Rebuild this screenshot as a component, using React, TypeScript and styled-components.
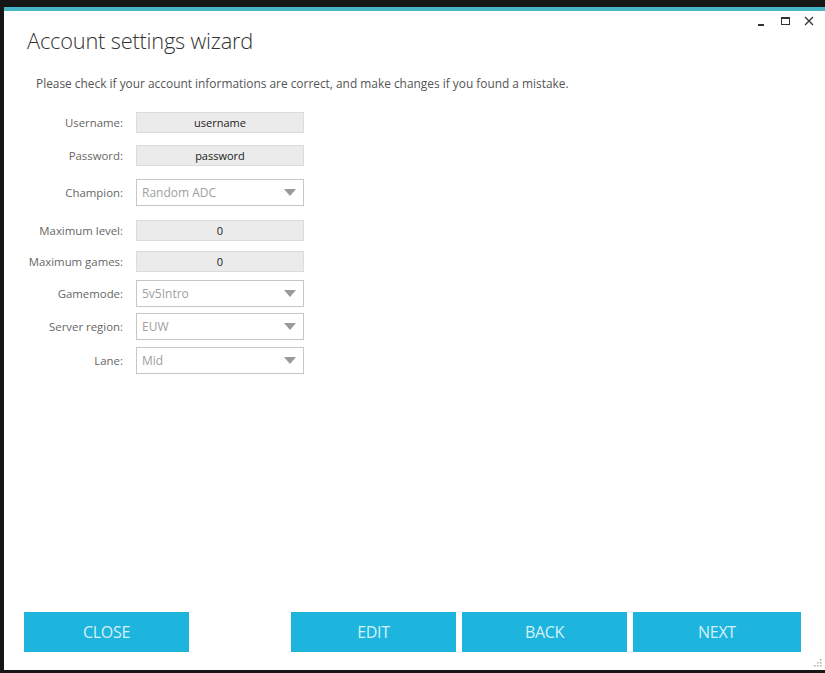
import React from 'react';
import styled, { createGlobalStyle } from 'styled-components';

const GlobalStyle = createGlobalStyle`
  html, body {
    margin: 0;
    padding: 0;
    background: #161616;
  }
  * {
    box-sizing: border-box;
  }
`;

const fields = [
  { label: 'Username:', value: 'username', kind: 'text', gap: 0 },
  { label: 'Password:', value: 'password', kind: 'text', gap: 12 },
  { label: 'Champion:', value: 'Random ADC', kind: 'select', gap: 13 },
  { label: 'Maximum level:', value: '0', kind: 'text', gap: 14 },
  { label: 'Maximum games:', value: '0', kind: 'text', gap: 10 },
  { label: 'Gamemode:', value: '5v5Intro', kind: 'select', gap: 8 },
  { label: 'Server region:', value: 'EUW', kind: 'select', gap: 6 },
  { label: 'Lane:', value: 'Mid', kind: 'select', gap: 7 },
];

const App: React.FC = () => {
  return (
    <Page>
      <GlobalStyle />
      <Window>
        <TopBar>
          <Title>Account settings wizard</Title>
          <Controls>
            <Control>
              <MinIcon />
            </Control>
            <Control>
              <MaxIcon />
            </Control>
            <Control>
              <svg width="10" height="10" viewBox="0 0 10 10">
                <path d="M1 1 L9 9 M9 1 L1 9" stroke="#333" strokeWidth="1.3" fill="none" />
              </svg>
            </Control>
          </Controls>
        </TopBar>
        <Description>
          Please check if your account informations are correct, and make changes if you found a mistake.
        </Description>
        <Form>
          {fields.map((f) => (
            <Row key={f.label} $gap={f.gap}>
              <Label>{f.label}</Label>
              {f.kind === 'text' ? (
                <TextBox>{f.value}</TextBox>
              ) : (
                <Select>
                  <span>{f.value}</span>
                  <svg width="12" height="7" viewBox="0 0 12 7">
                    <path d="M0 0 L12 0 L6 7 Z" fill="#9a9a9a" />
                  </svg>
                </Select>
              )}
            </Row>
          ))}
        </Form>
        <Footer>
          <Button $width={165}>CLOSE</Button>
          <RightButtons>
            <Button $width={165}>EDIT</Button>
            <Button $width={165}>BACK</Button>
            <Button $width={168}>NEXT</Button>
          </RightButtons>
        </Footer>
        <Grip>
          <svg width="8" height="8" viewBox="0 0 8 8">
            <rect x="6" y="0" width="1.5" height="1.5" fill="#aaa" />
            <rect x="3" y="3" width="1.5" height="1.5" fill="#aaa" />
            <rect x="6" y="3" width="1.5" height="1.5" fill="#aaa" />
            <rect x="0" y="6" width="1.5" height="1.5" fill="#aaa" />
            <rect x="3" y="6" width="1.5" height="1.5" fill="#aaa" />
            <rect x="6" y="6" width="1.5" height="1.5" fill="#aaa" />
          </svg>
        </Grip>
      </Window>
    </Page>
  );
};

const Page = styled.div`
  width: 825px;
  height: 673px;
  padding: 7px 0 3px 4px;
  background: #161616;
`;

const Window = styled.div`
  position: relative;
  height: 100%;
  background: #ffffff;
  border-top: 4px solid #45b7c6;
  display: flex;
  flex-direction: column;
  font-family: 'Open Sans', 'Noto Sans', sans-serif;
`;

const TopBar = styled.div`
  display: flex;
  justify-content: space-between;
  align-items: flex-start;
  padding: 0 10px 0 23px;
`;

const Title = styled.h1`
  margin: 15px 0 0;
  font-size: 21.8px;
  font-weight: 300;
  color: #333;
  letter-spacing: -0.2px;
`;

const Controls = styled.div`
  display: flex;
  gap: 12px;
  padding-top: 4px;
`;

const Control = styled.div`
  width: 12px;
  height: 12px;
  display: flex;
  align-items: center;
  justify-content: center;
`;

const MinIcon = styled.div`
  width: 6px;
  height: 2px;
  background: #333;
  margin-top: 7px;
`;

const MaxIcon = styled.div`
  width: 9px;
  height: 8px;
  border: 1px solid #333;
  border-top-width: 2px;
`;

const Description = styled.p`
  margin: 20px 0 0 32px;
  font-size: 11.9px;
  color: #555;
`;

const Form = styled.div`
  display: flex;
  flex-direction: column;
  margin-top: 21px;
`;

const Row = styled.div<{ $gap: number }>`
  display: flex;
  align-items: center;
  margin-top: ${(p) => p.$gap}px;
`;

const Label = styled.div`
  width: 119px;
  text-align: right;
  margin-right: 13px;
  font-size: 11.4px;
  color: #666;
`;

const TextBox = styled.div`
  width: 168px;
  height: 21px;
  background: #ebebeb;
  border: 1px solid #dcdcdc;
  display: flex;
  align-items: center;
  justify-content: center;
  font-size: 11px;
  color: #222;
`;

const Select = styled.div`
  width: 168px;
  height: 27px;
  background: #fff;
  border: 1px solid #c6c6c6;
  display: flex;
  align-items: center;
  justify-content: space-between;
  padding: 0 7px 0 5px;
  font-size: 12px;
  color: #a0a0a0;
`;

const Footer = styled.div`
  margin-top: auto;
  display: flex;
  justify-content: space-between;
  padding: 0 24px 18px 20px;
`;

const RightButtons = styled.div`
  display: flex;
  gap: 6px;
`;

const Button = styled.button<{ $width: number }>`
  width: ${(p) => p.$width}px;
  height: 40px;
  background: #1db5de;
  border: none;
  color: #d4f1fa;
  font-family: 'Open Sans', 'Noto Sans', sans-serif;
  font-size: 16px;
  letter-spacing: -0.3px;
  cursor: pointer;
`;

const Grip = styled.div`
  position: absolute;
  right: 3px;
  bottom: 3px;
  display: flex;
`;

export default App;
